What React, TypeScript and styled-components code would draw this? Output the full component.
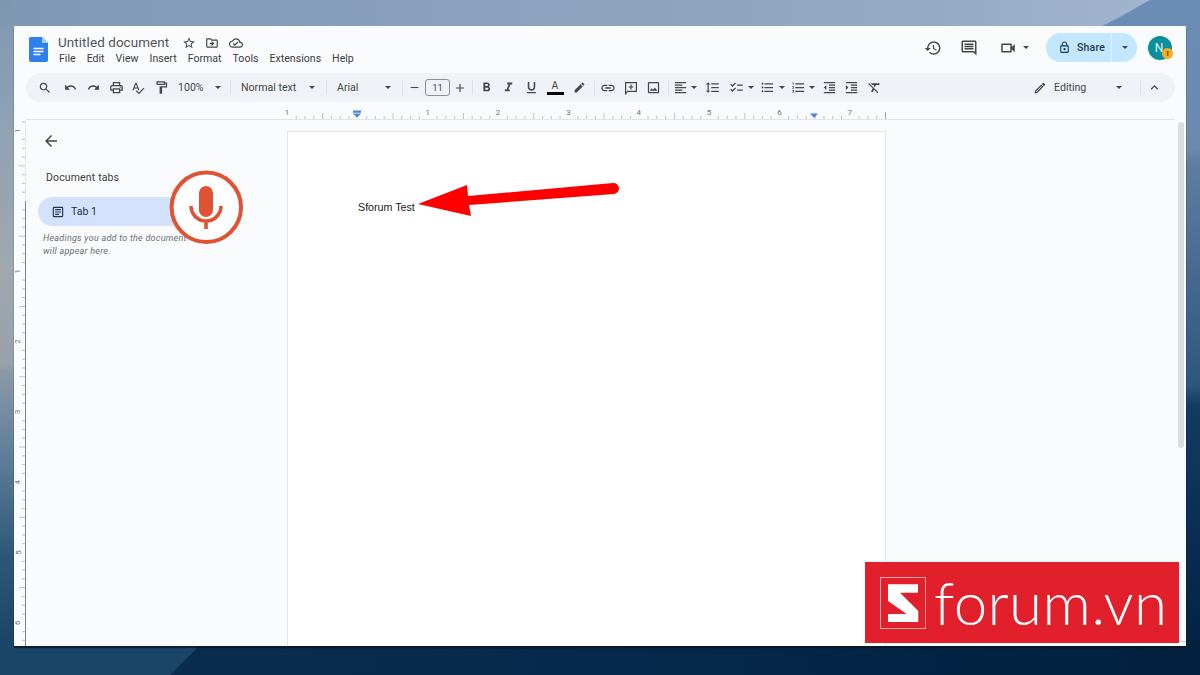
import React from "react";
import styled, { createGlobalStyle } from "styled-components";
import {
  MdSearch, MdUndo, MdRedo, MdOutlinePrint, MdOutlineSpellcheck, MdOutlineFormatPaint,
  MdFormatBold, MdFormatItalic, MdFormatUnderlined, MdLink, MdOutlineImage,
  MdFormatAlignLeft, MdFormatLineSpacing, MdChecklist, MdFormatListBulleted, MdFormatListNumbered,
  MdFormatIndentDecrease, MdFormatIndentIncrease, MdFormatClear, MdKeyboardArrowUp, MdArrowBack,
  MdOutlineArticle, MdStarBorder, MdOutlineDriveFileMove, MdOutlineCloudDone, MdHistory,
  MdOutlineComment, MdOutlineVideocam, MdLockOutline, MdEdit, MdOutlineEdit, MdAdd, MdRemove,
} from "react-icons/md";

const Global = createGlobalStyle`
  html, body { margin: 0; padding: 0; height: 100%; overflow: hidden; }
  body { font-family: Roboto, "Liberation Sans", sans-serif; color: #444746; }
  #root { width: 1200px; height: 675px; }
`;

const Desktop = styled.div`
  position: relative;
  width: 1200px;
  height: 675px;
  box-sizing: border-box;
  padding: 26px 14px 29px;
  overflow: hidden;
  background: #123a5c;
`;
const Wallpaper = styled.svg`
  position: absolute;
  inset: 0;
`;
const Window = styled.main`
  position: relative;
  display: flex;
  flex-direction: column;
  height: 620px;
  background: #f9fbfd;
  box-shadow: 0 2px 1px rgba(10, 20, 30, 0.75);
  overflow: hidden;
`;

/* header */
const Header = styled.header`
  display: flex;
  align-items: flex-start;
  height: 47px;
  flex: none;
  padding: 11px 0 0 15px;
  box-sizing: border-box;
`;
const TitleBlock = styled.div`
  display: flex;
  flex-direction: column;
  margin-left: 10px;
`;
const TitleRow = styled.div`
  display: flex;
  align-items: center;
  height: 12px;
  margin-bottom: 4px;
`;
const Title = styled.span`
  font-size: 13.4px;
  letter-spacing: 0.1px;
  line-height: 12px;
  color: #50545a;
  width: 111px;
  margin-right: 8px;
  white-space: nowrap;
`;
const TitleIcon = styled.span`
  display: flex;
  align-items: center;
  justify-content: center;
  width: 23.5px;
  font-size: 14px;
  color: #444746;
`;
const Menu = styled.nav`
  display: flex;
  gap: 11px;
  margin-left: 1px;
  font-size: 10.6px;
  line-height: 12px;
  color: #3c4043;
`;
const HeaderActions = styled.div`
  margin-left: auto;
  display: flex;
  align-items: center;
  height: 29px;
  margin-top: -4px;
  padding-right: 14px;
`;
const HeadIcon = styled.span<{ $w: number; $ml?: number }>`
  display: flex;
  align-items: center;
  justify-content: center;
  width: ${(p) => p.$w}px;
  margin-left: ${(p) => p.$ml ?? 0}px;
  font-size: 18px;
  color: #444746;
`;
const Share = styled.div`
  display: flex;
  align-items: center;
  width: 91px;
  height: 29px;
  border-radius: 15px;
  background: #c2e7ff;
  margin-left: 13px;
  color: #1f3a4d;
  font-size: 10.5px;
  font-weight: 500;
  letter-spacing: 0.2px;
`;
const ShareMain = styled.div`
  display: flex;
  align-items: center;
  gap: 6px;
  width: 66px;
  height: 29px;
  padding-left: 12px;
  box-sizing: border-box;
  border-right: 1px solid #e3f3ff;
  font-size: 10.5px;
  svg { font-size: 13px; }
`;
const ShareCaret = styled.div`
  flex: 1;
  display: flex;
  justify-content: center;
`;
const Avatar = styled.div`
  position: relative;
  width: 24px;
  height: 24px;
  border-radius: 50%;
  background: #0b8f9c;
  color: #e8f6f7;
  margin-left: 11px;
  font-size: 12px;
  line-height: 24px;
  text-align: center;
  text-indent: -2px;
`;
const AvatarBadge = styled.span`
  position: absolute;
  right: -1px;
  bottom: 1px;
  width: 11px;
  height: 11px;
  border-radius: 50%;
  background: #f6ae1c;
  color: #4a2f00;
  font-size: 8px;
  font-weight: 700;
  line-height: 11px;
  text-align: center;
  text-indent: 0;
`;

/* toolbar */
const Toolbar = styled.div`
  display: flex;
  align-items: center;
  flex: none;
  height: 29px;
  margin: 0 11px 0 12px;
  padding-left: 7px;
  border-radius: 15px;
  background: #eff3f8;
`;
const Tool = styled.span<{ $w: number; $size?: number; $ml?: number }>`
  display: flex;
  align-items: center;
  justify-content: center;
  flex: none;
  width: ${(p) => p.$w}px;
  margin-left: ${(p) => p.$ml ?? 0}px;
  font-size: ${(p) => p.$size ?? 15}px;
  color: #444746;
  svg { flex: none; }
`;
const Caret = styled.span<{ $w: number }>`
  display: flex;
  justify-content: center;
  flex: none;
  width: ${(p) => p.$w}px;
  &::after {
    content: "";
    border-left: 3px solid transparent;
    border-right: 3px solid transparent;
    border-top: 3px solid #444746;
  }
`;
const Sep = styled.span<{ $ml?: number }>`
  flex: none;
  width: 1px;
  height: 15px;
  background: #dfe3e8;
  margin-left: ${(p) => p.$ml ?? 0}px;
`;
const ToolText = styled.span<{ $w: number; $ml?: number }>`
  flex: none;
  width: ${(p) => p.$w}px;
  margin-left: ${(p) => p.$ml ?? 0}px;
  font-size: 10.6px;
  color: #444746;
  white-space: nowrap;
`;
const SizeBox = styled.span`
  flex: none;
  width: 25px;
  height: 17px;
  box-sizing: border-box;
  border: 1px solid #8b9095;
  border-radius: 3px;
  font-size: 9.5px;
  line-height: 15px;
  text-align: center;
  color: #444746;
`;
const ColorA = styled.span`
  flex: none;
  display: flex;
  flex-direction: column;
  align-items: center;
  width: 18px;
  font-size: 10.5px;
  line-height: 12px;
  color: #444746;
  &::after {
    content: "";
    width: 17px;
    height: 3px;
    background: #000;
  }
`;
const ToolSpacer = styled.span`
  flex: 1;
`;

/* ruler */
const RulerRow = styled.div`
  flex: none;
  height: 18px;
  margin: 0 11px 0 12px;
  padding-left: 256px;
  border-bottom: 1px solid #e1e4e8;
  box-sizing: border-box;
  svg { display: block; }
`;

/* body */
const Body = styled.div`
  flex: 1;
  display: flex;
  min-height: 0;
`;
const SideRuler = styled.svg`
  flex: none;
  display: block;
`;
const Sidebar = styled.aside`
  flex: none;
  width: 261px;
  box-sizing: border-box;
  padding: 12px 0 0 12px;
`;
const Back = styled.div`
  display: flex;
  margin-left: 4px;
  font-size: 18px;
  color: #444746;
`;
const SideTitle = styled.div`
  margin: 21px 0 0 8px;
  font-size: 10.5px;
  line-height: 14px;
  letter-spacing: 0.15px;
  color: #3c4043;
`;
const TabPill = styled.div`
  display: flex;
  align-items: center;
  gap: 6px;
  width: 170px;
  height: 29px;
  margin-top: 12px;
  padding-left: 13px;
  box-sizing: border-box;
  border-radius: 15px;
  background: #d3e3fd;
  font-size: 10.5px;
  color: #1d2f4a;
  svg { font-size: 14px; color: #1d3557; }
`;
const Caption = styled.p`
  margin: 6px 0 0 5px;
  font-size: 9px;
  line-height: 13px;
  font-style: italic;
  letter-spacing: 0.25px;
  color: #6a6f74;
  white-space: nowrap;
`;
const PageArea = styled.div`
  flex: 1;
  padding-top: 11px;
`;
const Page = styled.article`
  width: 599px;
  height: 100%;
  box-sizing: border-box;
  padding: 69px 0 0 70px;
  background: #fff;
  border: 1px solid #e3e6ea;
  border-bottom: 0;
  font-family: "Liberation Sans", Arial, sans-serif;
  font-size: 10.7px;
  line-height: 13px;
  color: #202124;
`;

/* overlays */
const Scrollbar = styled.div`
  position: absolute;
  left: 1164px;
  top: 96px;
  width: 6px;
  height: 326px;
  border-radius: 3px;
  background: #dadce0;
`;
const CornerLine = styled.div`
  position: absolute;
  left: 1164px;
  top: 615px;
  width: 8px;
  border-top: 1px solid #c4c7c5;
`;
const Overlay = styled.svg<{ $x: number; $y: number }>`
  position: absolute;
  left: ${(p) => p.$x}px;
  top: ${(p) => p.$y}px;
`;
const Logo = styled.div`
  position: absolute;
  left: 865px;
  top: 562px;
  width: 314px;
  height: 81px;
  display: flex;
  align-items: center;
  padding-left: 15px;
  box-sizing: border-box;
  background: #e1202b;
`;
const LogoWord = styled.span`
  margin-left: 8px;
  margin-top: -1px;
  font-family: Lato, "Open Sans", sans-serif;
  font-weight: 300;
  font-size: 60px;
  line-height: 70px;
  letter-spacing: 0.4px;
  color: #fff;
`;

const Ruler = () => {
  const ppi = 70.35;
  const ticks: React.ReactNode[] = [];
  for (let i = 0; i <= 68; i++) {
    const x = i * (ppi / 8) + 0.5;
    const h = i % 8 === 0 ? 0 : i % 4 === 0 ? 6 : 3;
    if (h) ticks.push(<line key={i} x1={x} x2={x} y1={17} y2={17 - h} stroke="#a6abb0" strokeWidth={0.7} />);
  }
  const labels = [[1, 0], [1, 2], [2, 3], [3, 4], [4, 5], [5, 6], [6, 7], [7, 8]];
  return (
    <svg width={610} height={17} viewBox="-5 0 610 17">
      {ticks}
      <line x1={598.5} x2={598.5} y1={10} y2={17} stroke="#9aa0a6" strokeWidth={0.8} />
      {labels.map(([n, inch], k) => (
        <text key={k} x={inch * ppi} y={13} textAnchor="middle" fontFamily="Roboto, sans-serif" fontSize={8} fill="#70757a">{n}</text>
      ))}
      <path d="M66 8.5h8v2.2h-8zM66 11.4h8l-4 4.4z" fill="#4a86e0" />
      <path d="M523 11.4h8l-4 4.6z" fill="#4a86e0" />
    </svg>
  );
};

const VerticalRuler = () => {
  const ppi = 70.3;
  const top = 81;
  const ticks: React.ReactNode[] = [];
  for (let i = -9; i <= 60; i++) {
    const y = top + i * (ppi / 8);
    if (i % 8 === 0) continue;
    const w = i % 4 === 0 ? 6 : 3;
    ticks.push(<line key={i} x1={11} x2={11 - w} y1={y} y2={y} stroke="#a6abb0" strokeWidth={0.7} />);
  }
  return (
    <SideRuler width={12} height={526} viewBox="0 0 12 526">
      <line x1={11.5} x2={11.5} y1={0} y2={top} stroke="#e3e6ea" />
      <line x1={11.5} x2={11.5} y1={top} y2={526} stroke="#80868b" />
      {ticks}
      {[-1, 1, 2, 3, 4, 5, 6].map((n) => {
        const y = top + n * ppi;
        return (
          <text key={n} x={4} y={y} transform={`rotate(-90 4 ${y})`} textAnchor="middle" dominantBaseline="central" fontFamily="Roboto, sans-serif" fontSize={8} fill="#70757a">{Math.abs(n)}</text>
        );
      })}
    </SideRuler>
  );
};

export default function App() {
  return (
    <Desktop>
      <Global />
      <Wallpaper width={1200} height={675} viewBox="0 0 1200 675">
        <defs>
          <linearGradient id="left" x1="0" y1="0" x2="0" y2="1">
            <stop offset="0" stopColor="#7d97b1" />
            <stop offset="0.18" stopColor="#8fa2b5" />
            <stop offset="0.4" stopColor="#a0a7ae" />
            <stop offset="0.54" stopColor="#98a1aa" />
            <stop offset="0.55" stopColor="#8b99a8" />
            <stop offset="0.68" stopColor="#5e7d99" />
            <stop offset="0.82" stopColor="#2f5878" />
            <stop offset="1" stopColor="#133c5e" />
          </linearGradient>
          <linearGradient id="top" x1="0" y1="0" x2="1" y2="0">
            <stop offset="0" stopColor="#7f99b4" />
            <stop offset="0.75" stopColor="#93a9c4" />
            <stop offset="1" stopColor="#a4b7d1" />
          </linearGradient>
          <linearGradient id="right" x1="0" y1="0" x2="0" y2="1">
            <stop offset="0" stopColor="#6b8db5" />
            <stop offset="0.22" stopColor="#6c8aae" />
            <stop offset="0.24" stopColor="#5f7ea1" />
            <stop offset="0.44" stopColor="#41668b" />
            <stop offset="0.57" stopColor="#2e577c" />
            <stop offset="0.6" stopColor="#123c62" />
            <stop offset="0.78" stopColor="#0a2e54" />
            <stop offset="1" stopColor="#03203e" />
          </linearGradient>
          <linearGradient id="bottom" x1="0" y1="0" x2="1" y2="0">
            <stop offset="0" stopColor="#0c2f50" />
            <stop offset="0.5" stopColor="#05284c" />
            <stop offset="1" stopColor="#03203e" />
          </linearGradient>
        </defs>
        <rect width={40} height={675} fill="url(#left)" />
        <rect x={14} width={1186} height={40} fill="url(#top)" />
        <rect x={1170} y={0} width={30} height={675} fill="url(#right)" />
        <path d="M1098 28 L1118 18 L1150 0 H1200 V40 H1098 Z" fill="#6b8db5" />
        <rect x={14} y={640} width={1186} height={35} fill="url(#bottom)" />
        <path d="M0 640 H205 L170 675 H0 Z" fill="#1b4566" />
      </Wallpaper>

      <Window>
        <Header>
          <svg width={19} height={25} viewBox="0 0 19 25">
            <path d="M2 0h11l6 6v17a2 2 0 0 1-2 2H2a2 2 0 0 1-2-2V2a2 2 0 0 1 2-2z" fill="#2f80ed" />
            <path d="M13 0l6 6h-6z" fill="#a5c8fa" />
            <path d="M4.5 11.5h10M4.5 14.5h10M4.5 17.5h7" stroke="#fff" strokeWidth={1.3} />
          </svg>
          <TitleBlock>
            <TitleRow>
              <Title>Untitled document</Title>
              <TitleIcon><MdStarBorder /></TitleIcon>
              <TitleIcon><MdOutlineDriveFileMove /></TitleIcon>
              <TitleIcon><MdOutlineCloudDone /></TitleIcon>
            </TitleRow>
            <Menu>
              <span>File</span>
              <span>Edit</span>
              <span>View</span>
              <span>Insert</span>
              <span>Format</span>
              <span>Tools</span>
              <span>Extensions</span>
              <span>Help</span>
            </Menu>
          </TitleBlock>
          <HeaderActions>
            <HeadIcon $w={22}><MdHistory /></HeadIcon>
            <HeadIcon $w={22} $ml={14}><MdOutlineComment /></HeadIcon>
            <HeadIcon $w={22} $ml={17}><MdOutlineVideocam /></HeadIcon>
            <Caret $w={14} />
            <Share>
              <ShareMain><MdLockOutline /><span>Share</span></ShareMain>
              <ShareCaret><Caret $w={10} /></ShareCaret>
            </Share>
            <Avatar>N<AvatarBadge>!</AvatarBadge></Avatar>
          </HeaderActions>
        </Header>

        <Toolbar>
          <Tool $w={24} $size={14}><MdSearch /></Tool>
          <Tool $w={26} $size={13}><MdUndo /></Tool>
          <Tool $w={20} $size={13}><MdRedo /></Tool>
          <Tool $w={26}><MdOutlinePrint /></Tool>
          <Tool $w={18} $size={14}><MdOutlineSpellcheck /></Tool>
          <Tool $w={28} $size={15}><MdOutlineFormatPaint /></Tool>
          <ToolText $w={28} $ml={3}>100%</ToolText>
          <Caret $w={24} />
          <Sep />
          <ToolText $w={57} $ml={10}>Normal text</ToolText>
          <Caret $w={28} />
          <Sep />
          <ToolText $w={39} $ml={10}>Arial</ToolText>
          <Caret $w={24} />
          <Sep $ml={2} />
          <Tool $w={22} $size={13}><MdRemove /></Tool>
          <SizeBox>11</SizeBox>
          <Tool $w={20} $size={14}><MdAdd /></Tool>
          <Sep $ml={2} />
          <Tool $w={26} $size={15}><MdFormatBold /></Tool>
          <Tool $w={18} $size={15}><MdFormatItalic /></Tool>
          <Tool $w={29} $size={15}><MdFormatUnderlined /></Tool>
          <ColorA>A</ColorA>
          <Tool $w={30} $size={13}><MdEdit /></Tool>
          <Sep />
          <Tool $w={25} $size={16}><MdLink /></Tool>
          <Tool $w={22}>
            <svg width={14} height={14} viewBox="0 0 14 14" fill="none" stroke="#444746" strokeWidth={1.2}>
              <path d="M1.6 1.6h10.8v8.8H3.6l-2 2.2z" />
              <path d="M7 3.6v4.8M4.6 6h4.8" />
            </svg>
          </Tool>
          <Tool $w={22} $size={15}><MdOutlineImage /></Tool>
          <Sep $ml={4} />
          <Tool $w={21} $ml={1}><MdFormatAlignLeft /></Tool>
          <Caret $w={6} />
          <Tool $w={31}><MdFormatLineSpacing /></Tool>
          <Tool $w={17}><MdChecklist /></Tool>
          <Caret $w={12} />
          <Tool $w={20}><MdFormatListBulleted /></Tool>
          <Caret $w={10} />
          <Tool $w={22}><MdFormatListNumbered /></Tool>
          <Caret $w={6} />
          <Tool $w={28}><MdFormatIndentDecrease /></Tool>
          <Tool $w={16}><MdFormatIndentIncrease /></Tool>
          <Tool $w={30}><MdFormatClear /></Tool>
          <ToolSpacer />
          <Tool $w={20} $size={14}><MdOutlineEdit /></Tool>
          <ToolText $w={55} $ml={4}>Editing</ToolText>
          <Caret $w={20} />
          <Sep $ml={11} />
          <Tool $w={24} $ml={1} $size={15}><MdKeyboardArrowUp /></Tool>
          <Tool $w={9} />
        </Toolbar>

        <RulerRow><Ruler /></RulerRow>

        <Body>
          <VerticalRuler />
          <Sidebar>
            <Back><MdArrowBack /></Back>
            <SideTitle>Document tabs</SideTitle>
            <TabPill><MdOutlineArticle /><span>Tab 1</span></TabPill>
            <Caption>Headings you add to the document<br />will appear here.</Caption>
          </Sidebar>
          <PageArea>
            <Page>Sforum Test</Page>
          </PageArea>
        </Body>
        <Scrollbar />
        <CornerLine />
      </Window>

      <Overlay $x={168} $y={168} width={78} height={78} viewBox="0 0 78 78">
        <circle cx={38.3} cy={39.3} r={34.7} fill="#fff" stroke="#df5334" strokeWidth={4} />
        <rect x={31} y={18} width={14} height={31} rx={7} fill="#df5334" />
        <path d="M23 38 A15 15 0 0 0 53 38 M38 53 V61" fill="none" stroke="#df5334" strokeWidth={3.6} />
      </Overlay>

      <Overlay $x={415} $y={180} width={210} height={40} viewBox="0 0 210 40">
        <path d="M3 24 L52 5 L53 16 L198 3 a5.5 5.5 0 0 1 1 11 L54 25 L56 36 Z" fill="#fe0000" />
      </Overlay>

      <Logo>
        <svg width={46} height={52} viewBox="0 0 46 52">
          <rect x={0.5} y={0.5} width={45} height={51} fill="none" stroke="#f3a5a8" />
          <path d="M8 7.3H38V15.7H20L38.3 34V45H8V37H26.7L8 24Z" fill="#fff" />
        </svg>
        <LogoWord>forum.vn</LogoWord>
      </Logo>
    </Desktop>
  );
}
